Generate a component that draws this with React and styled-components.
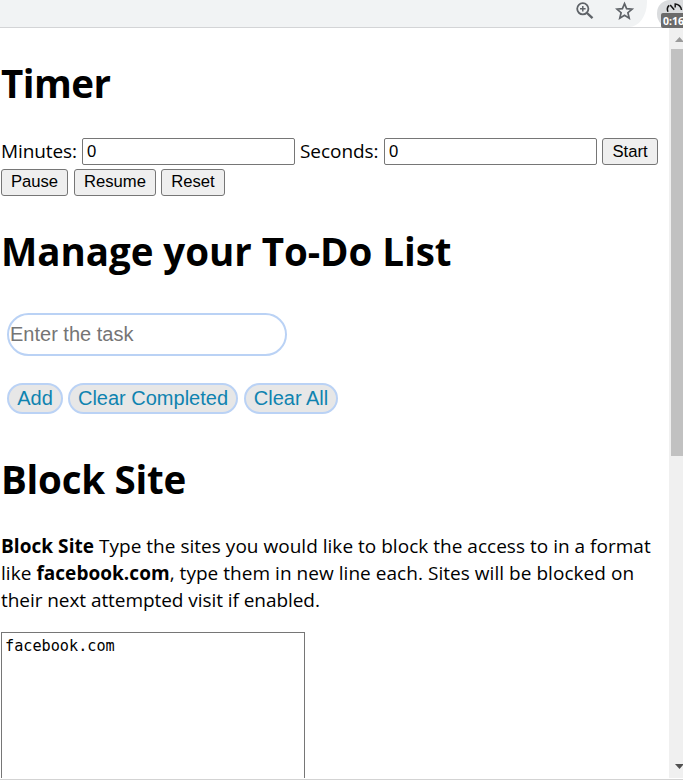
import React from 'react';
import styled, { createGlobalStyle } from 'styled-components';

const Global = createGlobalStyle`
  * { box-sizing: border-box; }
  html, body { margin: 0; padding: 0; overflow: hidden; background: #fff; }
`;

const Window = styled.div`
  width: 683px;
  height: 780px;
  display: flex;
  flex-direction: column;
  overflow: hidden;
  background: #fff;
  color: #000;
  border-bottom: 1px solid #d3d3d3;
  font-family: "Open Sans", "Noto Sans", sans-serif;
`;

const Toolbar = styled.header`
  height: 28px;
  flex: none;
  display: flex;
  justify-content: space-between;
  border-bottom: 1px solid #d3d4d6;
`;

const AddressBar = styled.div`
  width: 647px;
  height: 27px;
  display: flex;
  align-items: flex-start;
  justify-content: flex-end;
  gap: 20px;
  padding-right: 12px;
  background: #f1f3f4;
  border-radius: 0 0 18px 0 / 0 0 25px 0;
`;

const ToolIcon = styled.svg`
  width: 20px;
  height: 20px;
  flex: none;
  display: block;
`;

const Extension = styled.div`
  position: relative;
  width: 26px;
  height: 28px;
  background: #dadcde;
  border-radius: 13px 0 0 14px;
`;

const ExtensionIcon = styled.svg`
  display: block;
  width: 26px;
  height: 14px;
`;

const Badge = styled.span`
  position: absolute;
  left: 4px;
  top: 13px;
  width: 22px;
  height: 15px;
  padding-left: 2px;
  background: #6b6b6b;
  border-radius: 2px 0 0 2px;
  color: #fff;
  font-size: 10.5px;
  font-weight: 700;
  line-height: 16px;
  white-space: nowrap;
`;

const Body = styled.div`
  flex: 1;
  min-height: 0;
  display: flex;
  padding-bottom: 1px;
`;

const Page = styled.main`
  width: 669px;
  flex: none;
  overflow: hidden;
  padding-left: 1px;
`;

const Heading = styled.h1`
  margin: 0;
  padding-top: ${(p) => p.$top}px;
  height: ${(p) => p.$height}px;
  font-size: 38.5px;
  line-height: 54px;
  font-weight: 700;
  letter-spacing: ${(p) => p.$spacing}px;
  white-space: nowrap;
`;

const TimerRow = styled.div`
  display: flex;
  align-items: flex-start;
  height: ${(p) => p.$height}px;
`;

const Label = styled.label`
  width: ${(p) => p.$width}px;
  flex: none;
  font-size: 19px;
  line-height: 26px;
  letter-spacing: ${(p) => p.$spacing}px;
  white-space: nowrap;
`;

const NumberInput = styled.input`
  width: 213px;
  height: 27px;
  flex: none;
  margin: 0 5px 0 0;
  padding: 1px 4px;
  border: 1px solid #767676;
  border-radius: 2px;
  background: #fff;
  color: #000;
  font: 16.67px "Liberation Sans", Arial, sans-serif;
`;

const Button = styled.button`
  width: ${(p) => p.$width}px;
  height: 27px;
  flex: none;
  margin: 0 ${(p) => p.$gap || 0}px 0 0;
  padding: ${(p) => p.$drop || 0}px 0 1px;
  border: 1px solid #767676;
  border-radius: 3px;
  background: #efefef;
  color: #000;
  font: 16.67px "Liberation Sans", Arial, sans-serif;
  white-space: nowrap;
`;

const TaskForm = styled.form`
  height: 144px;
  padding: 31px 0 0 6px;
`;

const TaskInput = styled.input`
  display: block;
  width: 280px;
  height: 43px;
  margin: 0 0 27px;
  padding: 0 1px;
  border: 2px solid #bad2f5;
  border-radius: 22px;
  background: #fff;
  font: 20px "Liberation Sans", Arial, sans-serif;
  &::placeholder { color: #757575; opacity: 1; }
`;

const Pills = styled.div`
  display: flex;
`;

const Pill = styled(Button)`
  height: 31px;
  padding: 0 0 1px;
  border: 2px solid #bad2f5;
  border-radius: 16px;
  background: #e7e7e7;
  color: #0f83b0;
  font-size: 20px;
`;

const Description = styled.p`
  margin: 0;
  height: 99px;
  font-size: 19px;
  line-height: 27px;
`;

const Line = styled.span`
  display: block;
  white-space: nowrap;
  letter-spacing: ${(p) => p.$spacing}px;
`;

const Strong = styled.strong`
  font-weight: 700;
  letter-spacing: ${(p) => p.$spacing}px;
`;

const Sites = styled.textarea`
  display: block;
  width: 304px;
  height: 240px;
  margin: 0;
  padding: 3px;
  border: 1px solid #767676;
  background: #fff;
  color: #000;
  resize: none;
  overflow: hidden;
  font: 15.2px/20px "DejaVu Sans Mono", monospace;
`;

const Scrollbar = styled.div`
  width: 14px;
  height: 750px;
  flex: none;
  display: flex;
  flex-direction: column;
  overflow: hidden;
  background: #f0f0f0;
`;

const Arrow = styled.svg`
  display: block;
  width: 14px;
  height: 21px;
  flex: none;
`;

const Thumb = styled.div`
  height: 407px;
  margin: 0 0 auto 2px;
  background: #c1c1c1;
`;

export default function App() {
  return (
    <Window>
      <Global />
      <Toolbar>
        <AddressBar>
          <ToolIcon viewBox="0 0 20 20" fill="none" stroke="#5f6368">
            <circle cx="7.8" cy="8.8" r="5.6" strokeWidth="1.8" />
            <path d="M12 13l5.5 5.2" strokeWidth="2.4" />
            <path d="M5 8.8h5.6M7.8 6v5.6" strokeWidth="1.5" />
          </ToolIcon>
          <ToolIcon viewBox="0 0 20 20" fill="none" stroke="#5f6368" strokeWidth="1.7">
            <path d="M9.5 3.6l2.1 5 5.5.5-4.2 3.6 1.3 5.4-4.7-2.9-4.7 2.9 1.3-5.4L1.9 9.1l5.5-.5z" />
          </ToolIcon>
        </AddressBar>
        <Extension>
          <ExtensionIcon viewBox="0 0 26 14" fill="none" stroke="#151515" strokeWidth="1.5">
            <path d="M12.2 5.4Q9.2 8 11 11.8M13.2 5l4 4.8M18.2 7.6V4q5.6.8 6.3 6" />
          </ExtensionIcon>
          <Badge>0:16</Badge>
        </Extension>
      </Toolbar>
      <Body>
        <Page>
          <Heading $top={28} $height={110} $spacing={-0.5}>Timer</Heading>
          <TimerRow $height={31}>
            <Label $width={81} $spacing={-0.1}>Minutes:</Label>
            <NumberInput defaultValue="0" />
            <Label $width={84} $spacing={-0.05}>Seconds:</Label>
            <NumberInput defaultValue="0" />
            <Button $width={56} $drop={2}>Start</Button>
          </TimerRow>
          <TimerRow $height={27}>
            <Button $width={67} $gap={6}>Pause</Button>
            <Button $width={82} $gap={5}>Resume</Button>
            <Button $width={64}>Reset</Button>
          </TimerRow>
          <Heading $top={28} $height={86} $spacing={-0.04}>Manage your To-Do List</Heading>
          <TaskForm onSubmit={(e) => e.preventDefault()}>
            <TaskInput placeholder="Enter the task" />
            <Pills>
              <Pill type="button" $width={56} $gap={5}>Add</Pill>
              <Pill type="button" $width={170} $gap={6}>Clear Completed</Pill>
              <Pill type="button" $width={94}>Clear All</Pill>
            </Pills>
          </TaskForm>
          <Heading $top={26} $height={107} $spacing={-0.25}>Block Site</Heading>
          <Description>
            <Line $spacing={0.02}><Strong $spacing={0.05}>Block Site</Strong> Type the sites you would like to block the access to in a format</Line>
            <Line $spacing={0.04}>like <Strong $spacing={0.04}>facebook.com</Strong>, type them in new line each. Sites will be blocked on</Line>
            <Line $spacing={-0.06}>their next attempted visit if enabled.</Line>
          </Description>
          <Sites defaultValue="facebook.com" spellCheck={false} />
        </Page>
        <Scrollbar>
          <Arrow viewBox="0 0 14 21"><path d="M6 14l4.5-5 4.5 5z" fill="#9b9b9b" /></Arrow>
          <Thumb />
          <Arrow viewBox="0 0 14 21"><path d="M6 7h9l-4.5 5z" fill="#505050" /></Arrow>
        </Scrollbar>
      </Body>
    </Window>
  );
}
